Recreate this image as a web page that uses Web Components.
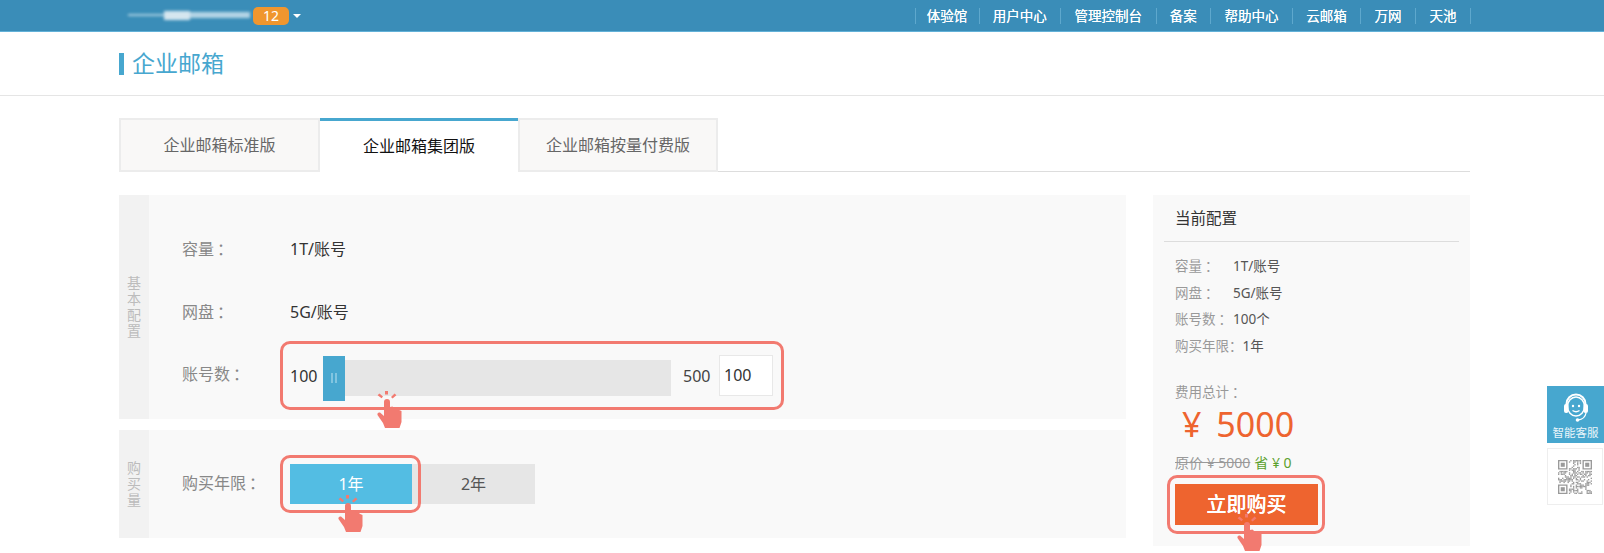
<!DOCTYPE html>
<html lang="zh-CN">
<head>
<meta charset="utf-8">
<title>企业邮箱</title>
<style>
html,body{margin:0;padding:0;background:#fff}
body{height:553px;overflow:hidden;position:relative;font-family:"Noto Sans","Noto Sans CJK SC",sans-serif;color:#333;font-size:16px}
.main{margin:0 134px 0 119px}
.cols{display:flex;justify-content:space-between;margin-top:23px;align-items:flex-start}
.left{width:1007px;display:flex;flex-direction:column;gap:11px}
</style>
</head>
<body>
<top-bar></top-bar>
<page-title>企业邮箱</page-title>
<div class="main">
  <tab-strip></tab-strip>
  <div class="cols">
    <div class="left">
      <config-panel side="基本配置" style="--panel-h:224px;--panel-pad:24px">
        <config-row label="容量"><span>1T/账号</span></config-row>
        <config-row label="网盘"><span>5G/账号</span></config-row>
        <config-row label="账号数"><tap-frame style="--t:-14px;--r:-11px;--b:-10px;--l:-10px;--hx:87px;--hy:36px;margin-top:5px"><count-slider></count-slider></tap-frame></config-row>
      </config-panel>
      <config-panel side="购买量" style="--panel-h:108px;--panel-pad:23px">
        <config-row label="购买年限"><year-choice></year-choice></config-row>
      </config-panel>
    </div>
    <summary-card></summary-card>
  </div>
</div>
<float-help></float-help>
<script>
const FONT='font-family:"Noto Sans","Noto Sans CJK SC",sans-serif;';
const COLON='<i style="font-style:normal;font-family:\'Noto Sans CJK TC\',sans-serif;padding-left:3px">：</i>';
function def(name,html,setup){
  customElements.define(name,class extends HTMLElement{
    constructor(){super();const r=this.attachShadow({mode:'open'});r.innerHTML=typeof html==='function'?html(this):html;}
    connectedCallback(){if(setup&&!this._s){this._s=1;setup(this.shadowRoot,this);}}
  });
}
def('top-bar',`<style>
:host{display:flex;align-items:center;height:31px;border-bottom:1px solid #62b1d8;background:#3a8db8;padding:0 133px 0 128px;color:#fff;${FONT}}
.who{position:relative;width:122px;height:7px;margin-top:-1px;filter:blur(1.800px);display:flex;align-items:center}
.who i{display:block}
.w1{width:36px;height:2px;background:#a9cfe2}
.w2{width:26px;height:9px;background:#d5e6ef}
.w3{width:60px;height:6px;background:#b4d4e5}
.badge{margin-left:3px;width:36px;height:18px;line-height:18px;border-radius:5px;background:#f0962e;text-align:center;font-size:14px}
.caret{margin-left:4px;width:0;height:0;border:4px solid transparent;border-top:4px solid #fff;border-bottom:0}
nav{margin-left:auto;display:flex;font-size:13.500px;line-height:16px}
a{display:block;box-sizing:border-box;text-align:center;border-left:1px solid #5ea8cd;color:#fff;white-space:nowrap;text-shadow:0 0 .6px #fff}
a:last-child{border-right:1px solid #5ea8cd}
</style><div class="who"><i class="w1"></i><i class="w2"></i><i class="w3"></i></div><div class="badge">12</div><div class="caret"></div>
<nav><a style="width:64px">体验馆</a><a style="width:81.500px">用户中心</a><a style="width:95.500px">管理控制台</a><a style="width:54.500px">备案</a><a style="width:82px">帮助中心</a><a style="width:68px">云邮箱</a><a style="width:55px">万网</a><a style="width:56px">天池</a></nav>`);
def('page-title',`<style>
:host{display:flex;align-items:center;height:63px;border-bottom:1px solid #e5e5e5;padding-left:119px;color:#47a7cf;${FONT}}
i{width:5px;height:22px;background:#47a7cf;margin-right:8px}
span{font-size:23px;line-height:30px;margin-top:-2px}
</style><i></i><span><slot></slot></span>`);
def('tab-strip',`<style>
:host{display:flex;margin-top:22px;height:53px;border-bottom:1px solid #ddd;${FONT}}
div{box-sizing:border-box;height:54px;border:2px solid #ececec;background:#f9f8f7;color:#666;font-size:16px;line-height:50px;text-align:center}
.on{background:#fff;color:#111;border:0;border-top:3px solid #47a7cf;line-height:50px}
div:last-child{border-left:2px solid #ececec}
</style><div style="width:201px">企业邮箱标准版</div><div class="on" style="width:198px">企业邮箱集团版</div><div style="width:200px">企业邮箱按量付费版</div>`);
def('config-panel',h=>`<style>
:host{display:flex;box-sizing:border-box;height:var(--panel-h);background:#f9f9f9;${FONT}}
.side{width:30px;flex:none;background:#f2f2f2;display:flex;align-items:center;justify-content:center;color:#bcbcbc;font-size:14px;line-height:16px}
.side span{width:14px;text-align:center}
.body{flex:1;padding-top:var(--panel-pad)}
</style><div class="side"><span>${h.getAttribute('side')}</span></div><div class="body"><slot></slot></div>`);
def('config-row',h=>`<style>
:host{display:flex;align-items:center;min-height:62.500px;padding-left:33px;font-size:16px;color:#333;${FONT}}
label{width:108px;flex:none;color:#888;margin-top:-4px;white-space:nowrap}
::slotted(span){margin-top:-4px}
</style><label>${h.getAttribute('label')}${COLON}</label><slot></slot>`);
const hand=`<svg width="25" height="37" viewBox="0 0 25 37" fill="#f27a70"><path d="M8 0h3v3.500H8zM.6 4.200l1.800-1.600L6 5.400 4.600 7.200zM14 6l3.600-3.400 1.800 1.600-3.800 3.400z"/><path d="M7 11a3 3 0 0 1 6 0v5l2.400-.4 1.800 1.500 2.800.1 2.200 1.800 2.300 1V31l-2 6H8l-2-5-5.500-8Q0 21 3 21.500L7 25z"/></svg>`;
def('tap-frame',`<style>
:host{display:inline-flex;position:relative}
.f{position:absolute;top:var(--t);right:var(--r);bottom:var(--b);left:var(--l);border:3px solid #f27a70;border-radius:10px;pointer-events:none}
.h{position:absolute;left:var(--hx);top:var(--hy);line-height:0}
</style><slot></slot><div class="f"></div><div class="h">${hand}</div>`);
def('count-slider',`<style>
:host{display:flex;align-items:center;height:45px;font-size:16px;color:#333}
.n{width:33px;margin-top:-3px}
.track{position:relative;width:348px;height:36px;background:#e6e6e6}
.knob{position:absolute;left:0;top:-4px;width:22px;height:45px;background:#47a7cf;display:flex;align-items:center;justify-content:center;gap:2px}
.knob i{width:2px;height:10px;background:#82c5e0}
.m{margin-left:12px;width:36px;color:#444;margin-top:-3px}
.box{box-sizing:border-box;width:54px;height:41px;margin-top:-4px;border:1px solid #e8e8e8;background:#fff;padding-left:4px;line-height:38px;color:#333}
</style><span class="n">100</span><div class="track"><div class="knob"><i></i><i></i></div></div><span class="m">500</span><div class="box">100</div>`);
def('year-choice',`<style>
:host{display:flex;font-size:16px}
.a,.b{height:40px;line-height:40px;text-align:center}
.a{width:122px;background:#53bde3;color:#fff}
.b{width:123px;background:#e6e6e6;color:#555}
</style><tap-frame style="--t:-9px;--r:-9px;--b:-9px;--l:-10px;--hx:48px;--hy:31px"><div class="a">1年</div></tap-frame><div class="b">2年</div>`);
def('summary-card',`<style>
:host{display:block;box-sizing:border-box;width:317px;height:351px;background:#f9f9f9;padding:0 11px;font-size:13.500px;color:#555;${FONT}}
.head{height:46px;line-height:46px;padding-left:11px;border-bottom:1px solid #ddd;font-size:15.500px;color:#333}
.list{padding:10px 0 0 11px}
.list div{display:flex;align-items:baseline;height:26.600px;line-height:26.600px}
.list b{font-weight:400;color:#999;min-width:58px;white-space:nowrap}
.list div:last-child b i{padding-left:0!important}
.low{padding-left:11px}
.t{margin-top:23px;line-height:20px;color:#999}
.p{margin:0 0 0 7px;font-size:34px;line-height:44px;color:#ee642f;word-spacing:6px}
.o{margin-top:7px;line-height:20px;font-size:14px;color:#999;white-space:nowrap}
.o s{margin-right:4px}
.o span{color:#5aa02c}
.buy{display:block;width:143px;height:41px;line-height:41px;text-align:center;background:#ee642f;color:#fff;font-size:20px;font-weight:500;text-shadow:0 0 .5px #fff}
tap-frame{margin-top:11px}
</style>
<div class="head">当前配置</div>
<div class="list"><div><b>容量${COLON}</b><span>1T/账号</span></div><div><b>网盘${COLON}</b><span>5G/账号</span></div><div><b>账号数${COLON}</b><span>100个</span></div><div><b>购买年限${COLON}</b><span>1年</span></div></div>
<div class="low"><div class="t">费用总计${COLON}</div><div class="p">¥ 5000</div><div class="o"><s>原价 ¥ 5000</s><span>省 ¥ 0</span></div>
<tap-frame style="--t:-9px;--r:-7px;--b:-9px;--l:-8px;--hx:62px;--hy:30px"><div class="buy">立即购买</div></tap-frame></div>`);
def('float-help',`<style>
:host{position:absolute;left:1547px;top:386px;width:57px;${FONT}}
.k{height:57px;background:#47a7cf;color:#e9f5fa;text-align:center;font-size:11.500px;line-height:16px;box-sizing:border-box;padding-top:7px}
.k svg{display:block;margin:0 auto 2px}
.q{box-sizing:border-box;width:56px;height:57px;margin-top:5px;background:#fff;border:1px solid #eee;display:flex;align-items:center;justify-content:center}
</style><div class="k"><svg width="28" height="30" viewBox="0 0 28 30" fill="none" stroke="#fff"><path d="M4.500 14V11a9.500 9.500 0 0 1 19 0v3" stroke-width="2"/><ellipse cx="14" cy="13.500" rx="8.500" ry="9.500" stroke-width="1.500"/><rect x="2" y="11" width="4.500" height="9" rx="2" fill="#fff" stroke="none"/><rect x="21.500" y="11" width="4.500" height="9" rx="2" fill="#fff" stroke="none"/><circle cx="11" cy="13" r="1.200" fill="#fff" stroke="none"/><circle cx="17" cy="13" r="1.200" fill="#fff" stroke="none"/><path d="M10.500 17.500q3.500 2.500 7 0" stroke-width="1.300"/><path d="M24 20q-1 6-8 7" stroke-width="1.300"/><circle cx="15.500" cy="27" r="1.800" fill="#fff" stroke="none"/></svg>智能客服</div><div class="q"><svg id="qr" width="34" height="34" viewBox="0 0 25 25" fill="#9a9a9a" style="filter:blur(.7px)"></svg></div>`,r=>{
  const s=r.getElementById('qr');let o='';
  const finder=(x,y)=>`<path fill-rule="evenodd" d="M${x} ${y}h7v7h-7zM${x+1} ${y+1}v5h5v-5z"/><rect x="${x+2}" y="${y+2}" width="3" height="3"/>`;
  o+=finder(0,0)+finder(18,0)+finder(0,18);
  let v=7;
  for(let y=0;y<25;y++)for(let x=0;x<25;x++){
    if((x<8&&y<8)||(x>16&&y<8)||(x<8&&y>16))continue;
    v=(v*31+x*7+y*13+11)%101;
    if(v%2)o+=`<rect x="${x}" y="${y}" width="1" height="1"/>`;
  }
  s.innerHTML=o;
});
</script>
</body>
</html>
